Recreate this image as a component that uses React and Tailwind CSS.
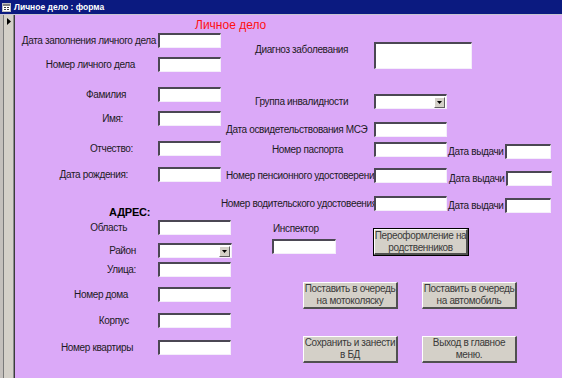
import React from 'react';

const inputCls =
  'h-[15px] shrink-0 bg-white border-t-2 border-l-2 border-b border-r border-t-[#4b4753] border-l-[#4b4753] border-b-[#f4eefa] border-r-[#f4eefa]';

const Field = ({ w = 'w-[63px]', extra = '' }) => <div className={`${inputCls} ${w} ${extra}`} />;

const Combo = ({ w }) => (
  <div className={`${inputCls} ${w} flex justify-end items-center`}>
    <div className="w-[11px] h-[11px] mr-px bg-[#d4d0c8] border-t border-l border-b border-r border-t-white border-l-white border-b-[#606060] border-r-[#606060] flex items-center justify-center">
      <svg width="5" height="3" viewBox="0 0 5 3">
        <polygon points="0,0 5,0 2.5,3" fill="#000" />
      </svg>
    </div>
  </div>
);

const Button = ({ children, w = 'w-[95px]', h = 'h-[27px]', outline = false }) => (
  <div className={`${w} ${h} shrink-0 ${outline ? 'border border-black' : ''}`}>
    <div className="w-full h-full bg-[#d4d0c8] border-t border-l border-b-2 border-r-2 border-t-white border-l-white border-b-[#505050] border-r-[#505050] flex flex-col items-center justify-center text-[10px] leading-[12px] text-[#3a3a3a] text-center whitespace-nowrap">
      {children}
    </div>
  </div>
);

const LeftRow = ({ label, pr, mt, children }) => (
  <div className={`flex items-center h-[15px] ${mt}`}>
    <div className={`w-[143px] shrink-0 text-right whitespace-nowrap ${pr}`}>{label}</div>
    {children}
  </div>
);

const IssueDate = ({ mt, ml }) => (
  <div className={`flex items-center ${mt} ${ml}`}>
    <div className="w-[57px] shrink-0 whitespace-nowrap">Дата выдачи</div>
    <Field w="w-[46px]" />
  </div>
);

export default function App() {
  return (
    <div className="w-[562px] h-[378px] overflow-hidden flex flex-col bg-[#dba9f8] font-['Liberation_Sans',Arial,sans-serif] text-[10px] leading-[14px] tracking-[-0.35px] text-[#1c1a24]">
      {/* title bar */}
      <div className="h-[14px] shrink-0 bg-[#0b1a80] flex items-center pl-[2px] gap-[3px]">
        <svg width="9" height="9" viewBox="0 0 9 9">
          <rect x="0" y="0" width="9" height="9" fill="#c0c0c0" />
          <rect x="1" y="1" width="7" height="7" fill="#fff" />
          <rect x="1" y="1" width="7" height="2" fill="#808080" />
          <rect x="2" y="4" width="2" height="1" fill="#404040" />
          <rect x="5" y="4" width="2" height="1" fill="#404040" />
          <rect x="2" y="6" width="2" height="1" fill="#404040" />
          <rect x="5" y="6" width="2" height="1" fill="#404040" />
        </svg>
        <span className="text-white font-bold text-[8.5px] leading-[12px] tracking-normal">Личное дело : форма</span>
      </div>
      <div className="h-px shrink-0 bg-[#c8c4d0]" />

      <div className="flex-1 flex min-h-0">
        {/* record selector */}
        <div className="w-[15px] shrink-0 flex">
          <div className="w-[3px] bg-[#c4c0bc]" />
          <div className="w-px bg-[#7a7a7a]" />
          <div className="w-[9px] bg-[#d4d0c8] flex justify-center pt-[3px]">
            <svg width="4" height="7" viewBox="0 0 4 7">
              <polygon points="0,0 4,3.5 0,7" fill="#000" />
            </svg>
          </div>
          <div className="w-px bg-[#8a8a8a]" />
          <div className="w-px bg-[#3c3c3c]" />
        </div>

        {/* form canvas */}
        <div className="flex-1 flex flex-col">
          <div className="h-[17px] shrink-0 pl-[180px] pt-[3px] text-[12px] leading-[14px] tracking-normal text-[#ff1010]">Личное дело</div>

          <div className="flex">
            {/* left column */}
            <div className="w-[206px] shrink-0 flex flex-col">
              <LeftRow label="Дата заполнения личного дела" pr="pr-[2px]" mt="mt-px"><Field /></LeftRow>
              <LeftRow label="Номер личного дела" pr="pr-[23px]" mt="mt-[9px]"><Field /></LeftRow>
              <LeftRow label="Фамилия" pr="pr-[32px]" mt="mt-[15px]"><Field /></LeftRow>
              <LeftRow label="Имя:" pr="pr-[35px]" mt="mt-[9px]"><Field /></LeftRow>
              <LeftRow label="Отчество:" pr="pr-[25px]" mt="mt-[15px]"><Field /></LeftRow>
              <LeftRow label="Дата рождения:" pr="pr-[30px]" mt="mt-[11px]"><Field /></LeftRow>
              <div className="mt-[23px] h-[14px] pl-[94px] font-bold text-[11px] tracking-[-0.2px] text-black">АДРЕС:</div>
              <LeftRow label="Область" pr="pr-[31px]" mt="mt-px"><Field w="w-[73px]" /></LeftRow>
              <LeftRow label="Район" pr="pr-[22px]" mt="mt-[8px]"><Combo w="w-[74px]" /></LeftRow>
              <LeftRow label="Улица:" pr="pr-[22px]" mt="mt-[4px]"><Field w="w-[73px]" /></LeftRow>
              <LeftRow label="Номер дома" pr="pr-[30px]" mt="mt-[10px]"><Field w="w-[73px]" /></LeftRow>
              <LeftRow label="Корпус" pr="pr-[29px]" mt="mt-[11px]"><Field w="w-[73px]" /></LeftRow>
              <LeftRow label="Номер квартиры" pr="pr-[25px]" mt="mt-[12px]"><Field w="w-[73px]" /></LeftRow>
            </div>

            {/* right column */}
            <div className="flex-1 flex flex-col">
              <div className="flex items-start mt-[10px]">
                <div className="w-[153px] shrink-0 pl-[34px] pt-px">Диагноз заболевания</div>
                <div className={`${inputCls} w-[98px] h-[27px]`} />
              </div>
              <div className="flex items-center mt-[25px] h-[15px]">
                <div className="w-[153px] shrink-0 pl-[34px]">Группа инвалидности</div>
                <Combo w="w-[73px]" />
              </div>
              <div className="flex items-center mt-[13px] h-[15px]">
                <div className="w-[153px] shrink-0 pl-[5px] whitespace-nowrap">Дата освидетельствования МСЭ</div>
                <Field w="w-[73px]" />
              </div>
              <div className="flex items-start mt-[5px]">
                <div className="w-[153px] shrink-0 pl-[51px] leading-[15px]">Номер паспорта</div>
                <Field w="w-[73px]" />
                <IssueDate mt="mt-[2px]" ml="ml-px" />
              </div>
              <div className="flex items-start mt-[9px]">
                <div className="w-[153px] shrink-0 pl-[5px] leading-[15px] whitespace-nowrap">Номер пенсионного удостоверения</div>
                <Field w="w-[73px]" />
                <IssueDate mt="mt-[3px]" ml="ml-[2px]" />
              </div>
              <div className="flex items-start mt-[10px]">
                <div className="w-[153px] shrink-0 leading-[15px] whitespace-nowrap">Номер водительского удостовеения</div>
                <Field w="w-[73px]" />
                <IssueDate mt="mt-[2px]" ml="ml-px" />
              </div>
              <div className="flex items-start mt-[9px]">
                <div className="ml-[51px] w-[64px] shrink-0 flex flex-col">
                  <div className="pl-px">Инспектор</div>
                  <Field w="w-[64px]" extra="mt-[3px]" />
                </div>
                <div className="ml-[37px] mt-[6px]">
                  <Button w="w-[96px]" h="h-[28px]" outline>
                    <span>Переоформление на</span>
                    <span>родственников</span>
                  </Button>
                </div>
              </div>
              <div className="flex mt-[26px] pl-[82px] gap-[24px]">
                <Button>
                  <span>Поставить в очередь</span>
                  <span>на мотоколяску</span>
                </Button>
                <Button>
                  <span>Поставить в очередь</span>
                  <span>на автомобиль</span>
                </Button>
              </div>
              <div className="flex mt-[27px] pl-[82px] gap-[24px]">
                <Button>
                  <span>Сохранить и занести</span>
                  <span>в БД</span>
                </Button>
                <Button>
                  <span>Выход в главное</span>
                  <span>меню.</span>
                </Button>
              </div>
            </div>
          </div>
        </div>
      </div>
    </div>
  );
}
